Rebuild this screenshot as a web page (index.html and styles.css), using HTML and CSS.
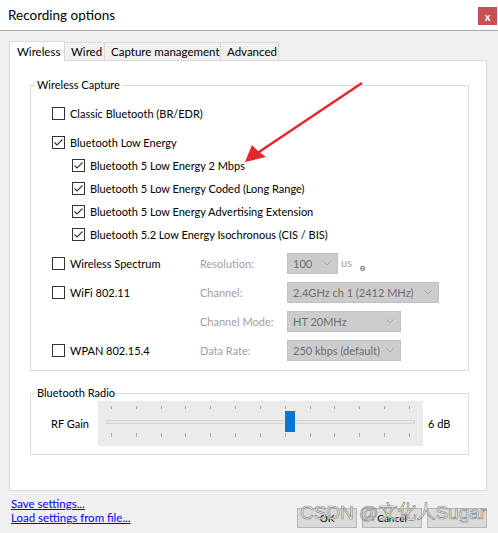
FILE: index.html
```html
<!DOCTYPE html>
<html>
<head>
<meta charset="utf-8">
<link rel="stylesheet" href="styles.css">
</head>
<body>
<div class="window">
  <div class="titlebar">
    <span class="title">Recording options</span>
    <span class="close">x</span>
  </div>
  <div class="tabs">
    <div class="tab active t1">Wireless</div>
    <div class="tab t2">Wired</div>
    <div class="tab t3">Capture management</div>
    <div class="tab t4">Advanced</div>
  </div>
  <div class="panel">
    <fieldset class="group">
      <legend>Wireless Capture</legend>
      <div class="rows">
        <div class="row first"><div class="opt"><span class="cb"></span>Classic Bluetooth (BR/EDR)</div></div>
        <div class="row gap"><div class="opt"><span class="cb on"><svg viewBox="0 0 11 11"><polyline points="1.5,5.5 4,8 9.5,2.5"/></svg></span>Bluetooth Low Energy</div></div>
        <div class="row sub"><div class="opt"><span class="cb on"><svg viewBox="0 0 11 11"><polyline points="1.5,5.5 4,8 9.5,2.5"/></svg></span>Bluetooth 5 Low Energy 2 Mbps</div></div>
        <div class="row sub"><div class="opt"><span class="cb on"><svg viewBox="0 0 11 11"><polyline points="1.5,5.5 4,8 9.5,2.5"/></svg></span>Bluetooth 5 Low Energy Coded (Long Range)</div></div>
        <div class="row sub"><div class="opt"><span class="cb on"><svg viewBox="0 0 11 11"><polyline points="1.5,5.5 4,8 9.5,2.5"/></svg></span>Bluetooth 5 Low Energy Advertising Extension</div></div>
        <div class="row sub"><div class="opt"><span class="cb on"><svg viewBox="0 0 11 11"><polyline points="1.5,5.5 4,8 9.5,2.5"/></svg></span>Bluetooth 5.2 Low Energy Isochronous (CIS / BIS)</div></div>
        <div class="row gap">
          <div class="opt fixed"><span class="cb"></span>Wireless Spectrum</div>
          <div class="lbl">Resolution:</div>
          <div class="combo w-res"><span>100</span><svg class="chev" viewBox="0 0 8 5"><polyline points="0.5,0.5 4,4 7.5,0.5"/></svg></div>
          <span class="unit">us</span><span class="theta">ɵ</span>
        </div>
        <div class="row gap">
          <div class="opt fixed"><span class="cb"></span>WiFi 802.11</div>
          <div class="lbl">Channel:</div>
          <div class="combo w-ch"><span>2.4GHz ch 1 (2412 MHz)</span><svg class="chev" viewBox="0 0 8 5"><polyline points="0.5,0.5 4,4 7.5,0.5"/></svg></div>
        </div>
        <div class="row gap">
          <div class="opt fixed"></div>
          <div class="lbl">Channel Mode:</div>
          <div class="combo w-md"><span>HT 20MHz</span><svg class="chev" viewBox="0 0 8 5"><polyline points="0.5,0.5 4,4 7.5,0.5"/></svg></div>
        </div>
        <div class="row gap">
          <div class="opt fixed"><span class="cb"></span>WPAN 802.15.4</div>
          <div class="lbl">Data Rate:</div>
          <div class="combo w-md"><span>250 kbps (default)</span><svg class="chev" viewBox="0 0 8 5"><polyline points="0.5,0.5 4,4 7.5,0.5"/></svg></div>
        </div>
      </div>
    </fieldset>
    <fieldset class="group radio">
      <legend>Bluetooth Radio</legend>
      <div class="radio-row">
        <div class="rf">RF Gain</div>
        <div class="slider">
          <div class="ticks"><i></i><i></i><i></i><i></i><i></i><i></i><i></i><i></i><i></i><i></i><i></i><i></i><i></i></div>
          <div class="track"></div>
          <div class="ticks bottom"><i></i><i></i><i></i><i></i><i></i><i></i><i></i><i></i><i></i><i></i><i></i><i></i><i></i></div>
          <div class="thumb"></div>
        </div>
        <div class="db">6 dB</div>
      </div>
    </fieldset>
  </div>
  <div class="footer">
    <div class="links">
      <a href="#">Save settings...</a>
      <a href="#">Load settings from file...</a>
    </div>
    <div class="buttons">
      <div class="btn">OK</div>
      <div class="btn">Cancel</div>
      <div class="btn"></div>
    </div>
  </div>
  <svg class="arrow" viewBox="0 0 498 533">
    <line x1="362" y1="83" x2="256" y2="154"/>
    <polygon points="245,162 252,145 258,151 266,157"/>
  </svg>
  <div class="watermark">CSDN @文化人Sugar</div>
</div>
</body>
</html>
```
FILE: styles.css
```css
body {
  margin: 0;
  background: #f0f0f0;
  font-family: Lato, "Liberation Sans", sans-serif;
  font-size: 11px;
  color: #000;
}
.window {
  position: relative;
  width: 498px;
  height: 533px;
  overflow: hidden;
  background: #f0f0f0;
}
.titlebar {
  height: 30px;
  background: #fff;
  border-bottom: 1px solid #ababab;
  display: flex;
  align-items: center;
  padding-left: 8px;
}
.title {
  flex: 1;
  font-size: 13.5px;
}
.close {
  align-self: flex-start;
  margin-top: 7px;
  margin-right: 1px;
  width: 19px;
  height: 18px;
  background: #c75050;
  color: #fff;
  font-size: 11px;
  font-weight: bold;
  display: flex;
  align-items: center;
  justify-content: center;
}
.tabs {
  display: flex;
  align-items: flex-end;
  height: 19px;
  margin: 10px 0 0 9px;
  position: relative;
  z-index: 1;
}
.tab {
  box-sizing: border-box;
  height: 18px;
  line-height: 17px;
  padding-left: 6px;
  background: #f0f0f0;
  border: 1px solid #d9d9d9;
  border-left: none;
  border-bottom: none;
  white-space: nowrap;
  font-size: 11.5px;
}
.tab.active {
  height: 20px;
  line-height: 19px;
  margin-bottom: -1px;
  padding-left: 7px;
  background: #fff;
  border-left: 1px solid #d9d9d9;
}
.t1 { width: 56px; }
.t2 { width: 40px; }
.t3 { width: 116px; }
.t4 { width: 58px; }
.panel {
  margin-left: 9px;
  width: 478px;
  height: 431px;
  box-sizing: border-box;
  border: 1px solid #d9d9d9;
  background: #fff;
  overflow: hidden;
}
.group {
  margin: 17px 17px 0 20px;
  padding: 0;
  border: 1px solid #dcdcdc;
  min-width: 0;
}
.group legend {
  margin-left: 4px;
  padding: 0 2px;
  line-height: 14px;
}
.rows {
  padding: 10px 0 8px 21px;
}
.row {
  display: flex;
  align-items: center;
  height: 23px;
}
.row.gap { margin-top: 6px; }
.row.sub { padding-left: 20px; }
.opt {
  display: flex;
  align-items: center;
  gap: 5px;
  white-space: nowrap;
}
.opt.fixed { width: 148px; }
.cb {
  box-sizing: border-box;
  width: 13px;
  height: 13px;
  border: 1px solid #333;
  background: #fff;
  display: inline-flex;
}
.cb svg {
  width: 11px;
  height: 11px;
  fill: none;
  stroke: #333;
  stroke-width: 1.1;
}
.lbl {
  width: 87px;
  color: #a0a0a0;
  white-space: nowrap;
}
.combo {
  box-sizing: border-box;
  height: 21px;
  background: #cccccc;
  border: 1px solid #bfbfbf;
  color: #6d6d6d;
  display: flex;
  align-items: center;
  justify-content: space-between;
  padding: 0 6px 0 5px;
  white-space: nowrap;
}
.w-res { width: 51px; }
.w-ch { width: 152px; }
.w-md { width: 114px; }
.chev {
  width: 8px;
  height: 5px;
  fill: none;
  stroke: #a5a5a5;
  stroke-width: 1;
}
.unit {
  color: #a0a0a0;
  margin-left: 3px;
  margin-top: -3px;
}
.theta {
  font-size: 9px;
  color: #555;
  margin-left: 8px;
  margin-top: 8px;
}
.group.radio { margin-top: 15px; }
.radio-row {
  display: flex;
  align-items: center;
  padding: 1px 0 8px 20px;
}
.rf { width: 47px; }
.slider {
  position: relative;
  box-sizing: border-box;
  width: 325px;
  height: 45px;
  background: #ebebeb;
  padding-top: 5px;
}
.ticks {
  display: flex;
  justify-content: space-between;
  padding: 0 13px;
  height: 3px;
}
.ticks i {
  width: 1px;
  height: 3px;
  background: #a8a8a8;
}
.ticks.bottom {
  margin-top: 9px;
  height: 4px;
}
.ticks.bottom i { height: 4px; }
.track {
  box-sizing: border-box;
  margin: 11px 8px 0 8px;
  height: 4px;
  background: #e7e7e7;
  border: 1px solid #d3d3d3;
}
.thumb {
  position: absolute;
  left: 187px;
  top: 10px;
  width: 10px;
  height: 21px;
  background: #0078d7;
}
.db { margin-left: 5px; }
.footer {
  display: flex;
  align-items: flex-start;
  padding: 6px 11px 0 11px;
}
.links {
  display: flex;
  flex-direction: column;
}
.links a {
  color: #0000ee;
  font-size: 11.5px;
  line-height: 14px;
  text-decoration: underline;
}
.buttons {
  margin-left: auto;
  margin-top: 11px;
  display: flex;
  gap: 5px;
}
.btn {
  box-sizing: border-box;
  width: 60px;
  height: 20px;
  background: #d9d9d9;
  border: 1px solid #b5b5b5;
  display: flex;
  align-items: center;
  justify-content: center;
  font-size: 10px;
}
.arrow {
  position: absolute;
  left: 0;
  top: 0;
  width: 498px;
  height: 533px;
  pointer-events: none;
}
.arrow line {
  stroke: #e5262b;
  stroke-width: 2.5;
}
.arrow polygon { fill: #e5262b; }
.watermark {
  position: absolute;
  left: 300px;
  top: 500px;
  font-family: "Liberation Sans", "Noto Sans CJK SC", sans-serif;
  font-size: 19px;
  line-height: 26px;
  color: rgba(255, 255, 255, 0.75);
  -webkit-text-stroke: 0.7px #8a8a8a;
  white-space: nowrap;
  pointer-events: none;
}
```
